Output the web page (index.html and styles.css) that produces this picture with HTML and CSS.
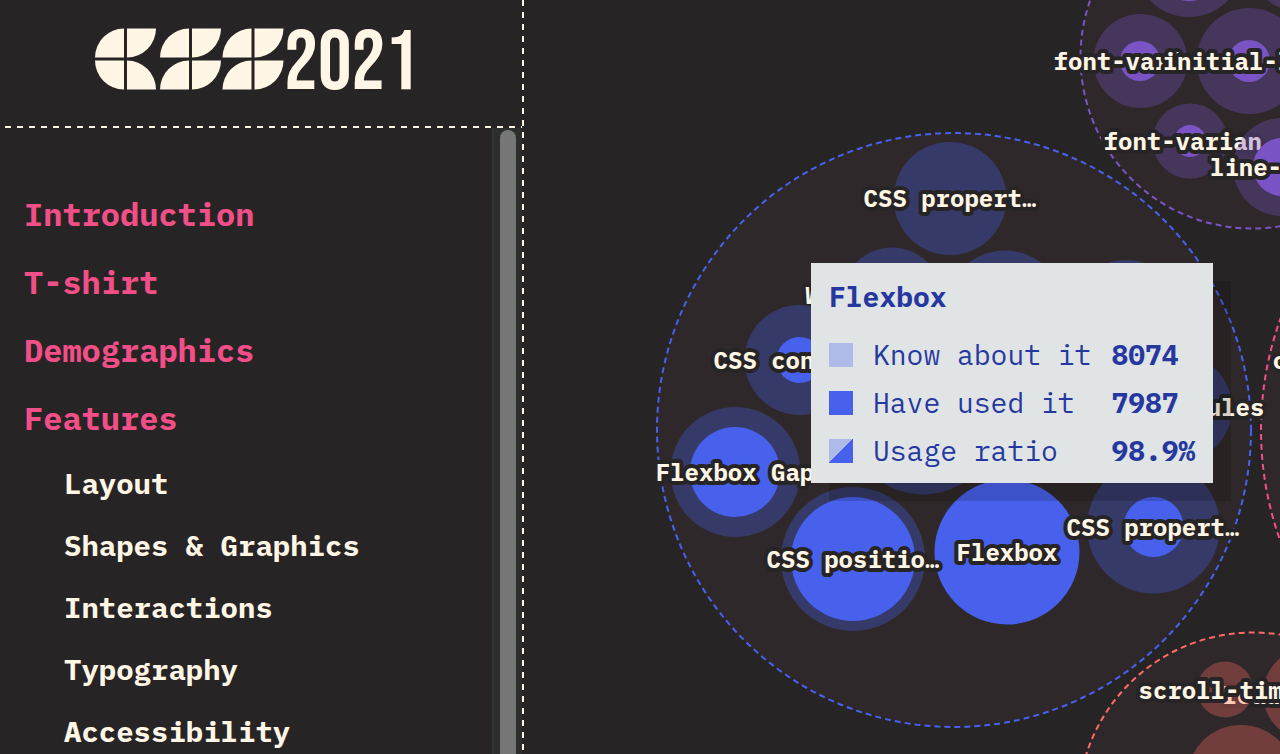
FILE: index.html
```html
<!DOCTYPE html>
<html lang="en">
<head>
<meta charset="utf-8">
<title>State of CSS 2021</title>
<link rel="stylesheet" href="styles.css">
</head>
<body>
<div class="layout">
  <aside class="sidebar">
    <header class="brand">
      <a class="logo" href="#">
        <svg class="logo-mark" viewBox="0 0 189 62" role="img" aria-label="CSS">
          <defs>
            <path id="se" d="M0 29A29 29 0 0 1 29 0V29Z"/>
            <path id="nw" d="M0 0H29A29 29 0 0 1 0 29Z"/>
            <path id="ne" d="M0 0H29V29A29 29 0 0 1 0 0Z"/>
            <path id="sw" d="M0 0A29 29 0 0 1 29 29H0Z"/>
          </defs>
          <use href="#se" x="0" y="0.5"/><use href="#nw" x="32" y="0.5"/>
          <use href="#ne" x="0" y="32.5"/><use href="#sw" x="32" y="32.5"/>
          <use href="#se" x="65" y="0.5"/><use href="#nw" x="97" y="0.5"/>
          <use href="#se" x="65" y="32.5"/><use href="#nw" x="97" y="32.5"/>
          <use href="#se" x="127.5" y="0.5"/><use href="#nw" x="159.5" y="0.5"/>
          <use href="#se" x="127.5" y="32.5"/><use href="#nw" x="159.5" y="32.5"/>
        </svg>
        <span class="logo-year">2021</span>
      </a>
    </header>
    <div class="sidebar-body">
      <nav class="nav">
        <ul class="nav-list">
          <li><a class="nav-link" href="#">Introduction</a></li>
          <li><a class="nav-link" href="#">T-shirt</a></li>
          <li><a class="nav-link" href="#">Demographics</a></li>
          <li><a class="nav-link" href="#">Features</a>
            <ul class="nav-sublist">
              <li><a class="nav-sublink" href="#">Layout</a></li>
              <li><a class="nav-sublink" href="#">Shapes &amp; Graphics</a></li>
              <li><a class="nav-sublink" href="#">Interactions</a></li>
              <li><a class="nav-sublink" href="#">Typography</a></li>
              <li><a class="nav-sublink" href="#">Accessibility</a></li>
            </ul>
          </li>
        </ul>
      </nav>
      <div class="scroll-track"><div class="scroll-thumb"></div></div>
    </div>
  </aside>

  <main class="chart">
    <svg class="bubbles" aria-label="Feature usage">
      <g transform="translate(-524 0)">
        <g class="purple">
          <circle class="group" cx="1252" cy="57" r="171.5"/>
          <circle class="know" cx="1189" cy="-37" r="54"/><circle class="used" cx="1189" cy="-37" r="38"/>
          <circle class="know" cx="1300" cy="-38" r="50"/>
          <circle class="know" cx="1140.5" cy="61" r="47"/><circle class="used" cx="1140" cy="61" r="20"/>
          <text x="1140" y="70">font-varian…</text>
          <circle class="know" cx="1249.5" cy="61" r="53"/><circle class="used" cx="1249" cy="61" r="21"/>
          <text x="1249" y="70">initial-let…</text>
          <circle class="know" cx="1190" cy="141" r="37.5"/><circle class="used" cx="1190" cy="141" r="16"/>
          <text x="1190" y="150">font-varian…</text>
          <circle class="know" cx="1282" cy="167" r="49"/><circle class="used" cx="1282" cy="167" r="29"/>
          <text x="1282" y="176">line-clamp</text>
        </g>
        <g class="pink">
          <circle class="group" cx="1589" cy="430" r="328"/>
          <text x="1359" y="369">currentcolor</text>
        </g>
        <g class="red">
          <circle class="group" cx="1253" cy="807.5" r="175"/>
          <circle class="know" cx="1309" cy="694" r="46"/>
          <text x="1309" y="704">leading-trim</text>
          <circle class="know" cx="1225" cy="689.5" r="28"/>
          <text x="1225" y="699">scroll-time…</text>
          <circle class="know" cx="1241" cy="779" r="54"/>
        </g>
        <g class="blue">
          <circle class="group" cx="954" cy="430" r="297"/>
          <circle class="know" cx="950" cy="198.5" r="56.5"/>
          <text x="950" y="207">CSS propert…</text>
          <circle class="know" cx="892" cy="297.5" r="50"/>
          <text x="892" y="304">Writing mod…</text>
          <circle class="know" cx="1005" cy="310" r="59.5"/>
          <circle class="know" cx="1126" cy="318" r="58"/>
          <circle class="know" cx="799.5" cy="360" r="55"/><circle class="used" cx="799.5" cy="360" r="23"/>
          <text x="800" y="369">CSS contain…</text>
          <circle class="know" cx="1178" cy="408" r="54"/>
          <text x="1178" y="416">@layer rules</text>
          <circle class="know" cx="923" cy="419.5" r="75"/>
          <circle class="know" cx="735.5" cy="472" r="65"/><circle class="used" cx="735" cy="472" r="45"/>
          <text x="735" y="481">Flexbox Gap</text>
          <circle class="used" cx="1007" cy="552" r="72.5"/>
          <text x="1007" y="561">Flexbox</text>
          <circle class="know" cx="853" cy="559" r="72"/><circle class="used" cx="853" cy="559" r="62"/>
          <text x="853" y="568">CSS positio…</text>
          <circle class="know" cx="1153.5" cy="527" r="66.5"/><circle class="used" cx="1153.5" cy="527" r="30"/>
          <text x="1153" y="536">CSS propert…</text>
        </g>
      </g>
    </svg>
    <section class="tooltip" role="tooltip">
      <h2 class="tooltip-title">Flexbox</h2>
      <dl class="stats">
        <dt class="stat-name"><span class="swatch swatch-know"></span>Know about it</dt><dd class="stat-value">8074</dd>
        <dt class="stat-name"><span class="swatch swatch-used"></span>Have used it</dt><dd class="stat-value">7987</dd>
        <dt class="stat-name"><span class="swatch swatch-ratio"></span>Usage ratio</dt><dd class="stat-value">98.9%</dd>
      </dl>
    </section>
  </main>
</div>
</body>
</html>
```

FILE: styles.css
```css
:root {
  --bg: #272425;
  --cream: #fff6e5;
  --pink: #f24f88;
  --blue: #4861ec;
  --purple: #7a54c4;
  --red: #ff6a66;
  --navy: #2638a0;
}

* { box-sizing: border-box; }

body {
  margin: 0;
  background: var(--bg);
  color: var(--cream);
  font-family: "IBM Plex Mono", "Liberation Mono", monospace;
  overflow: hidden;
}

ul, dl, dd, h2 { margin: 0; padding: 0; list-style: none; }
a { color: inherit; text-decoration: none; }

.layout { display: flex; height: 100vh; }

.sidebar {
  flex: 0 0 524px;
  display: flex;
  flex-direction: column;
  padding-right: 2px;
  background: repeating-linear-gradient(to bottom, var(--cream) 0 6px, transparent 6px 12px) right top / 2px 100% no-repeat;
}

.brand {
  flex: none;
  display: flex;
  justify-content: center;
  height: 128px;
  padding: 28px 8px 0 0;
  background: repeating-linear-gradient(to right, transparent 0 5px, var(--cream) 5px 11px, transparent 11px 12px) left bottom / 100% 2px no-repeat;
}

.logo { display: flex; align-items: flex-start; height: 62px; }
.logo-mark { width: 189px; height: 62px; fill: var(--cream); }
.logo-year {
  font-family: "Bebas Neue", "Liberation Sans Narrow", "Roboto Condensed", "Open Sans Condensed", "Roboto", sans-serif;
  font-weight: 400;
  font-size: 84px;
  line-height: 72px;
}

.sidebar-body { flex: 1; display: flex; min-height: 0; overflow: hidden; }
.nav { flex: 1; padding: 52px 24px 0; }
.nav-link { display: block; font-size: 32px; font-weight: 700; line-height: 68px; color: var(--pink); }
.nav-sublist { padding-left: 40px; }
.nav-sublink { display: block; font-size: 29px; font-weight: 700; line-height: 62px; white-space: nowrap; }

.scroll-track {
  flex: 0 0 30px;
  padding: 2px 6px 0;
  border-left: 2px solid #333334;
  background: #2c2d2d;
}
.scroll-thumb { height: 100%; width: 16px; border-radius: 8px 8px 0 0; background: #777; }

.chart { position: relative; flex: 1; min-width: 0; overflow: hidden; }
.bubbles { display: block; width: 100%; height: 100%; }
.bubbles text {
  font-size: 24px;
  font-weight: 700;
  text-anchor: middle;
  fill: var(--cream);
  stroke: var(--bg);
  stroke-width: 8px;
  stroke-linejoin: round;
  paint-order: stroke;
}
.blue { color: var(--blue); }
.purple { color: var(--purple); }
.red { color: var(--red); }
.pink { color: var(--pink); }
.group { fill: #2f282a; stroke: currentColor; stroke-width: 2px; stroke-dasharray: 6 4; }
.know { fill: currentColor; fill-opacity: .32; }
.used { fill: currentColor; }

.tooltip {
  position: absolute;
  left: 287px;
  top: 263px;
  padding: 18px;
  background: #e0e4e5;
  color: var(--navy);
  box-shadow: 18px 18px 0 rgba(0, 0, 0, .15);
}
.tooltip-title { font-size: 28px; font-weight: 700; line-height: 32px; margin-bottom: 28px; }
.stats { display: grid; grid-template-columns: auto auto; gap: 20px; font-size: 28px; line-height: 28px; }
.stat-name { display: flex; align-items: center; gap: 20px; white-space: nowrap; }
.stat-value { font-weight: 700; }
.swatch { width: 24px; height: 24px; }
.swatch-know { background: #aebae7; }
.swatch-used { background: var(--blue); }
.swatch-ratio { background: linear-gradient(135deg, #aebae7 50%, var(--blue) 50%); }
```
